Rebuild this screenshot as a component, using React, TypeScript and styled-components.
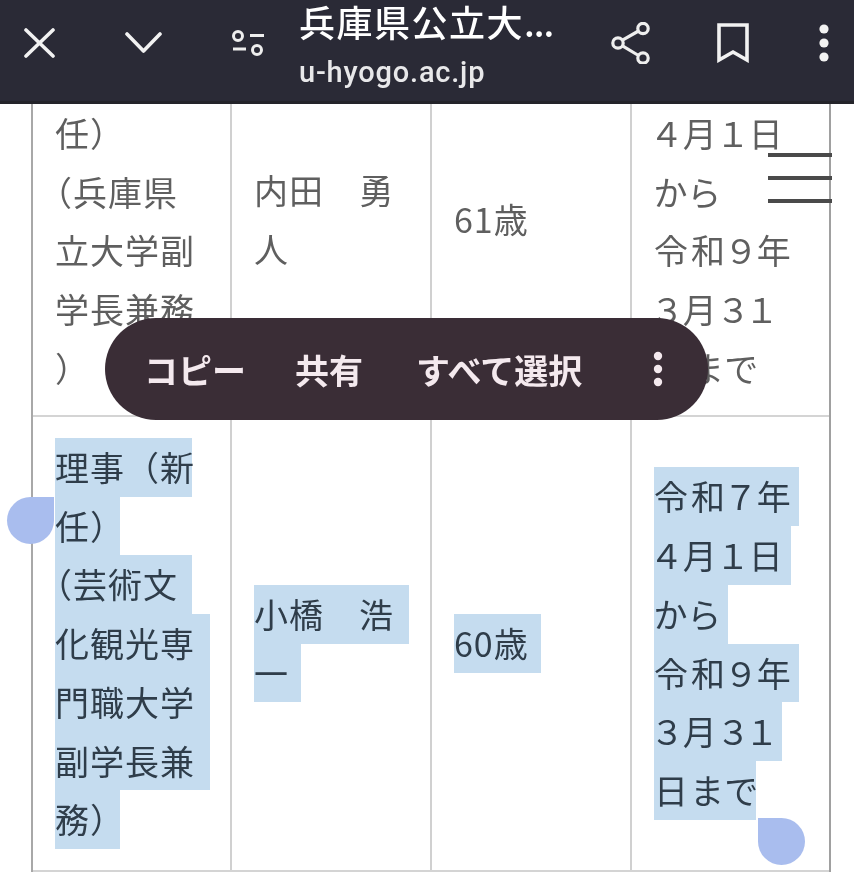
import React from 'react';
import styled, { createGlobalStyle } from 'styled-components';

const GlobalStyle = createGlobalStyle`
  html, body {
    margin: 0;
    padding: 0;
    background: #fff;
  }
`;

const Page = styled.div`
  position: relative;
  width: 854px;
  height: 873px;
  overflow: hidden;
  display: flex;
  flex-direction: column;
  background: #fff;
  font-family: "Noto Sans CJK JP", "Noto Sans", sans-serif;
  filter: blur(0.7px);
`;

const TopBar = styled.div`
  flex: 0 0 104px;
  height: 104px;
  min-height: 0;
  box-sizing: border-box;
  display: flex;
  align-items: center;
  padding: 0 25px 16px 24px;
  background: #2a2a36;
  border-bottom: 3px solid #24242a;
  color: #fff;
`;

const IconGroup = styled.div<{ $gap: number }>`
  display: flex;
  align-items: center;
  gap: ${(p) => p.$gap}px;
`;

const TitleBlock = styled.div`
  flex: 1;
  margin-left: 35px;
  margin-top: 7px;
  display: flex;
  flex-direction: column;
`;

const PageTitle = styled.div`
  font-size: 36px;
  font-weight: 500;
  line-height: 36px;
  letter-spacing: 1.5px;
  white-space: nowrap;
`;

const TitleDots = styled.span`
  letter-spacing: -1px;
`;

const PageUrl = styled.div`
  margin-top: 15px;
  font-family: Roboto, "Noto Sans", sans-serif;
  font-size: 29px;
  font-weight: 500;
  line-height: 36px;
  letter-spacing: 0.8px;
  color: #e8e8ea;
`;

const MoreIcon = styled.svg`
  margin-left: 4px;
`;

const Table = styled.div`
  margin-left: 31px;
  width: 800px;
  border-left: 2px solid #a8a8a8;
  border-right: 2px solid #a0a0a0;
  box-sizing: border-box;
`;

const Row = styled.div<{ $height: number }>`
  display: grid;
  grid-template-columns: 199px 200px 200px 197px;
  height: ${(p) => p.$height}px;
  border-bottom: 2px solid #d4d4d4;
  box-sizing: border-box;
`;

const Cell = styled.div<{ $top?: boolean; $lift?: number }>`
  display: flex;
  flex-direction: column;
  justify-content: ${(p) => (p.$top ? 'flex-start' : 'center')};
  align-items: flex-start;
  padding: 0 0 ${(p) => p.$lift ?? 0}px 22px;
  border-right: 2px solid #d0d0d0;
  box-sizing: border-box;

  &:last-child {
    border-right: none;
  }
`;

const Line = styled.div<{ $w?: number; $dates?: boolean }>`
  height: 58.7px;
  line-height: 58.7px;
  font-size: 34px;
  letter-spacing: ${(p) => (p.$dates ? '3px' : '1px')};
  font-feature-settings: ${(p) => (p.$dates ? '"palt"' : 'normal')};
  white-space: nowrap;
  text-spacing-trim: trim-start;
  color: ${(p) => (p.$w ? '#2f3d4a' : '#5f5f5f')};
  background: ${(p) => (p.$w ? '#c5dcef' : 'transparent')};
  width: ${(p) => (p.$w ? `${p.$w}px` : 'auto')};
`;

const SelectionMenu = styled.div`
  position: absolute;
  left: 105px;
  top: 318px;
  width: 603px;
  height: 102px;
  box-sizing: border-box;
  padding: 0 45px 0 39px;
  border-radius: 51px;
  background: #3a2d36;
  display: flex;
  align-items: center;
  color: #f4e9ee;
  font-size: 34px;
  font-weight: 700;
  white-space: nowrap;
`;

const MenuItem = styled.span<{ $gap: number }>`
  margin-right: ${(p) => p.$gap}px;
`;

const MenuDots = styled.svg`
  margin-left: auto;
`;

const Handle = styled.div<{ $side: 'left' | 'right' }>`
  position: absolute;
  width: 47px;
  height: 47px;
  background: #a9bdee;
  ${(p) =>
    p.$side === 'left'
      ? 'left: 7px; top: 497px; border-radius: 50% 0 50% 50%;'
      : 'left: 758px; top: 818px; border-radius: 0 50% 50% 50%;'}
`;

const PageMenu = styled.div`
  position: absolute;
  left: 768px;
  top: 153px;
  width: 64px;
  height: 50px;
  display: flex;
  flex-direction: column;
  justify-content: space-between;
`;

const PageMenuBar = styled.div`
  height: 4px;
  background: #4a4a4a;
`;

const firstRow = [
  { lines: ['任）', '（兵庫県', '立大学副', '学長兼務', '）'], top: true },
  { lines: ['内田　勇', '人'], lift: 80 },
  { lines: ['61歳'], lift: 80 },
  { lines: ['４月１日', 'から', '令和９年', '３月３１', '日まで'], top: true, dates: true },
];

const secondRow = [
  {
    lines: [
      { t: '理事（新', w: 137 },
      { t: '任）', w: 65 },
      { t: '（芸術文', w: 137 },
      { t: '化観光専', w: 155 },
      { t: '門職大学', w: 155 },
      { t: '副学長兼', w: 155 },
      { t: '務）', w: 65 },
    ],
  },
  {
    lines: [
      { t: '小橋　浩', w: 155 },
      { t: '一', w: 47 },
    ],
  },
  { lines: [{ t: '60歳', w: 87 }] },
  {
    dates: true,
    lines: [
      { t: '令和７年', w: 145 },
      { t: '４月１日', w: 137 },
      { t: 'から', w: 74 },
      { t: '令和９年', w: 145 },
      { t: '３月３１', w: 128 },
      { t: '日まで', w: 102 },
    ],
  },
];

const App: React.FC = () => {
  return (
    <Page>
      <GlobalStyle />
      <TopBar>
        <IconGroup $gap={70}>
          <svg width="31" height="30" viewBox="0 0 31 30" fill="none" stroke="#f2f2f2" strokeWidth="3.6" strokeLinecap="round">
            <path d="M2 2 L29 28 M29 2 L2 28" />
          </svg>
          <svg width="37" height="21" viewBox="0 0 37 21" fill="none" stroke="#f2f2f2" strokeWidth="3.6" strokeLinecap="round" strokeLinejoin="round">
            <path d="M2 2 L18.5 19 L35 2" />
          </svg>
          <svg width="32" height="26" viewBox="0 0 32 26" fill="none" stroke="#eee" strokeWidth="3">
            <circle cx="6" cy="6" r="4.5" />
            <path d="M18 5.5 H32 M1 19 H14" />
            <circle cx="25" cy="20" r="4.5" />
          </svg>
        </IconGroup>
        <TitleBlock>
          <PageTitle>
            兵庫県公立大<TitleDots>...</TitleDots>
          </PageTitle>
          <PageUrl>u-hyogo.ac.jp</PageUrl>
        </TitleBlock>
        <IconGroup $gap={66}>
          <svg width="40" height="42" viewBox="0 0 40 42" fill="none" stroke="#eee" strokeWidth="3.2">
            <circle cx="7" cy="21" r="5.2" />
            <circle cx="32" cy="6.5" r="5.2" />
            <circle cx="32" cy="36" r="5.2" />
            <path d="M11.5 18.2 L27.5 9 M11.5 23.8 L27.5 33.5" />
          </svg>
          <svg width="32" height="40" viewBox="0 0 32 40" fill="none" stroke="#f2f2f2" strokeWidth="3.6">
            <path d="M2 2 H30 V37 L16 29 L2 37 Z" />
          </svg>
          <MoreIcon width="10" height="38" viewBox="0 0 10 38" fill="#f2f2f2">
            <circle cx="5" cy="5" r="4.6" />
            <circle cx="5" cy="19" r="4.6" />
            <circle cx="5" cy="33" r="4.6" />
          </MoreIcon>
        </IconGroup>
      </TopBar>

      <Table>
        <Row $height={313}>
          {firstRow.map((cell, i) => (
            <Cell key={i} $top={cell.top} $lift={cell.lift}>
              {cell.lines.map((l, j) => (
                <Line key={j} $dates={cell.dates}>
                  {l}
                </Line>
              ))}
            </Cell>
          ))}
        </Row>
        <Row $height={455}>
          {secondRow.map((cell, i) => (
            <Cell key={i}>
              {cell.lines.map((l, j) => (
                <Line key={j} $w={l.w} $dates={cell.dates}>
                  {l.t}
                </Line>
              ))}
            </Cell>
          ))}
        </Row>
      </Table>

      <PageMenu>
        <PageMenuBar />
        <PageMenuBar />
        <PageMenuBar />
      </PageMenu>

      <SelectionMenu>
        <MenuItem $gap={49}>コピー</MenuItem>
        <MenuItem $gap={53}>共有</MenuItem>
        <MenuItem $gap={0}>すべて選択</MenuItem>
        <MenuDots width="10" height="36" viewBox="0 0 10 36" fill="#f4e9ee">
          <circle cx="5" cy="5" r="4.2" />
          <circle cx="5" cy="18" r="4.2" />
          <circle cx="5" cy="31" r="4.2" />
        </MenuDots>
      </SelectionMenu>

      <Handle $side="left" />
      <Handle $side="right" />
    </Page>
  );
};

export default App;
